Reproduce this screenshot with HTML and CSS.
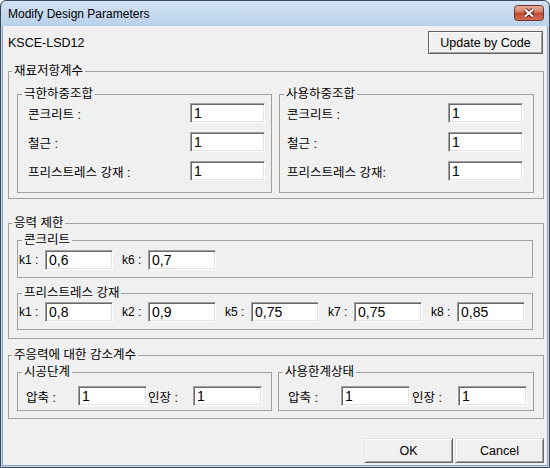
FILE: index.html
```html
<!DOCTYPE html>
<html lang="ko">
<head>
<meta charset="utf-8">
<title>Modify Design Parameters</title>
<link rel="stylesheet" href="styles.css">
</head>
<body>
<div class="window">
  <div class="titlebar">
    <span class="title">Modify Design Parameters</span>
    <span class="close">
      <svg width="30" height="16" viewBox="0 0 30 16">
        <defs>
          <linearGradient id="cg" x1="0" y1="0" x2="0" y2="1">
            <stop offset="0" stop-color="#e9b0a2"/>
            <stop offset="0.45" stop-color="#d27a68"/>
            <stop offset="0.5" stop-color="#c2452f"/>
            <stop offset="1" stop-color="#d0705a"/>
          </linearGradient>
        </defs>
        <rect x="0.5" y="0.5" width="29" height="15" rx="3" fill="url(#cg)" stroke="#6f3327"/>
        <path d="M11 4.5 L19 11.5 M19 4.5 L11 11.5" stroke="#5a2118" stroke-width="4.2"/>
        <path d="M11 4.5 L19 11.5 M19 4.5 L11 11.5" stroke="#ffffff" stroke-width="2.2"/>
      </svg>
    </span>
  </div>
  <div class="client">
    <div class="toprow">
      <span class="code">KSCE-LSD12</span>
      <button class="btn btn-update" type="button">Update by Code</button>
    </div>

    <fieldset class="group outer sec1">
      <legend>재료저항계수</legend>
      <div class="cols cols-a">
        <fieldset class="group inner">
          <legend>극한하중조합</legend>
          <div class="rows rows-left">
            <div class="frow"><span>콘크리트 :</span><input class="field wide" type="text" value="1"></div>
            <div class="frow"><span>철근 :</span><input class="field wide" type="text" value="1"></div>
            <div class="frow"><span>프리스트레스 강재 :</span><input class="field wide" type="text" value="1"></div>
          </div>
        </fieldset>
        <fieldset class="group inner">
          <legend>사용하중조합</legend>
          <div class="rows rows-right">
            <div class="frow"><span>콘크리트 :</span><input class="field wide" type="text" value="1"></div>
            <div class="frow"><span>철근 :</span><input class="field wide" type="text" value="1"></div>
            <div class="frow"><span>프리스트레스 강재:</span><input class="field wide" type="text" value="1"></div>
          </div>
        </fieldset>
      </div>
    </fieldset>

    <fieldset class="group outer sec2">
      <legend>응력 제한</legend>
      <div class="stack">
        <fieldset class="group inner">
          <legend>콘크리트</legend>
          <div class="krow krow-top">
            <div class="kcell"><span class="klabel">k1 :</span><input class="field kfield" type="text" value="0,6"></div>
            <div class="kcell"><span class="klabel">k6 :</span><input class="field kfield" type="text" value="0,7"></div>
          </div>
        </fieldset>
        <fieldset class="group inner">
          <legend>프리스트레스 강재</legend>
          <div class="krow krow-bottom">
            <div class="kcell"><span class="klabel">k1 :</span><input class="field kfield" type="text" value="0,8"></div>
            <div class="kcell"><span class="klabel">k2 :</span><input class="field kfield" type="text" value="0,9"></div>
            <div class="kcell"><span class="klabel">k5 :</span><input class="field kfield" type="text" value="0,75"></div>
            <div class="kcell"><span class="klabel">k7 :</span><input class="field kfield" type="text" value="0,75"></div>
            <div class="kcell"><span class="klabel">k8 :</span><input class="field kfield" type="text" value="0,85"></div>
          </div>
        </fieldset>
      </div>
    </fieldset>

    <fieldset class="group outer sec3">
      <legend>주응력에 대한 감소계수</legend>
      <div class="cols cols-b">
        <fieldset class="group inner">
          <legend>시공단계</legend>
          <div class="prow prow-left">
            <span class="plabel p-comp">압축 :</span><input class="field pfield" type="text" value="1">
            <span class="plabel p-tens">인장 :</span><input class="field pfield" type="text" value="1">
          </div>
        </fieldset>
        <fieldset class="group inner">
          <legend>사용한계상태</legend>
          <div class="prow prow-right">
            <span class="plabel p-comp">압축 :</span><input class="field pfield" type="text" value="1">
            <span class="plabel p-tens">인장 :</span><input class="field pfield" type="text" value="1">
          </div>
        </fieldset>
      </div>
    </fieldset>

    <div class="actions">
      <button class="btn btn-action" type="button">OK</button>
      <button class="btn btn-action" type="button">Cancel</button>
    </div>
  </div>
</div>
</body>
</html>
```

FILE: styles.css
```css
* {
  box-sizing: border-box;
}

html,
body {
  margin: 0;
  padding: 0;
}

body {
  width: 550px;
  height: 468px;
  overflow: hidden;
  background: #ffffff;
  font-family: "Liberation Sans", "Noto Sans CJK KR", sans-serif;
  font-size: 12.5px;
  color: #000000;
}

.window {
  width: 550px;
  height: 468px;
  border: 1px solid #3a4858;
  border-radius: 6px 6px 0 0;
  background: #c3d6ec;
  padding: 0 1px 1px;
  display: flex;
  flex-direction: column;
}

.titlebar {
  height: 25px;
  flex: none;
  display: flex;
  justify-content: space-between;
  align-items: flex-start;
  padding: 0 4px 0 6px;
  background: linear-gradient(#d2e2f3, #b9d1ea);
  border-radius: 5px 5px 0 0;
}

.title {
  margin-top: 6px;
  font-family: "Liberation Sans", sans-serif;
  font-size: 12px;
  line-height: 14px;
  color: #000000;
}

.close {
  margin-top: 4px;
  width: 30px;
  height: 16px;
  display: block;
}

.close svg {
  display: block;
}

.client {
  flex: 1;
  background: #f0f0f0;
  border: 1px solid #8ca3bd;
  border-top: none;
  padding: 0 3px 0 5px;
}

.toprow {
  margin-top: 5px;
  height: 23px;
  display: flex;
  justify-content: space-between;
  align-items: center;
  padding-right: 1px;
}

.code {
  font-size: 12.5px;
  line-height: 14px;
}

.btn {
  font-family: "Liberation Sans", sans-serif;
  font-size: 12.5px;
  color: #000000;
  background: #f0f0f0;
  padding: 0;
  margin: 0;
}

.btn-update {
  width: 115px;
  height: 23px;
  border: 1px solid #646464;
  box-shadow: inset 1px 1px #ffffff, inset -1px -1px #a0a0a0;
}

.group {
  margin: 0;
  padding: 0;
  border: 1px solid #a0a0a0;
  min-inline-size: 0;
}

.group > legend {
  padding: 0 2px;
  margin-left: 3px;
  font-size: 12.5px;
  line-height: 14px;
}

.inner > legend {
  margin-left: 4px;
}

.sec1 {
  margin-top: 10px;
}

.sec2 {
  margin-top: 17px;
}

.sec3 {
  margin-top: 9px;
}

.cols {
  display: grid;
}

.cols-a {
  grid-template-columns: 255px 255px;
  column-gap: 7px;
  padding: 9px 0 5px 8px;
}

.cols-b {
  grid-template-columns: 255px 256px;
  column-gap: 6px;
  padding: 3px 0 7px 8px;
}

.rows {
  display: flex;
  flex-direction: column;
  gap: 9px;
  padding-top: 2px;
  padding-bottom: 11px;
}

.rows-left {
  padding-left: 10px;
  padding-right: 6px;
}

.rows-right {
  padding-left: 7px;
  padding-right: 10px;
}

.frow {
  height: 20px;
  display: flex;
  justify-content: space-between;
  align-items: center;
}

.field {
  height: 20px;
  margin: 0;
  padding: 0 3px;
  font-family: "Liberation Sans", sans-serif;
  font-size: 14px;
  color: #000000;
  background: #ffffff;
  border: 1px solid;
  border-color: #a0a0a0 #ffffff #ffffff #a0a0a0;
  box-shadow: inset 1px 1px #696969, inset -1px -1px #e3e3e3;
  outline: none;
}

.wide {
  width: 75px;
}

.stack {
  display: flex;
  flex-direction: column;
  gap: 8px;
  padding: 3px 10px 8px 8px;
}

.krow {
  display: flex;
  gap: 9px;
  padding-left: 1px;
  padding-bottom: 7px;
}

.krow-top {
  padding-top: 3px;
}

.krow-bottom {
  padding-top: 2px;
}

.kcell {
  display: flex;
  align-items: center;
}

.klabel {
  width: 26px;
  font-size: 12px;
}

.kfield {
  width: 68px;
}

.prow {
  display: flex;
  align-items: center;
  padding-top: 7px;
  padding-bottom: 4px;
}

.prow-left {
  padding-left: 8px;
}

.prow-right {
  padding-left: 9px;
}

.plabel {
  display: block;
}

.prow-left .p-comp {
  width: 52px;
}

.prow-left .p-tens {
  width: 45px;
  margin-left: 1px;
}

.prow-right .p-comp {
  width: 53px;
}

.prow-right .p-tens {
  width: 46px;
  margin-left: 2px;
}

.pfield {
  width: 69px;
}

.actions {
  margin-top: 19px;
  display: flex;
  justify-content: flex-end;
  gap: 2px;
}

.btn-action {
  width: 89px;
  height: 25px;
  border: 1px solid;
  border-color: #e3e3e3 #696969 #696969 #e3e3e3;
  box-shadow: inset 1px 1px #ffffff, inset -1px -1px #a0a0a0;
}
```
